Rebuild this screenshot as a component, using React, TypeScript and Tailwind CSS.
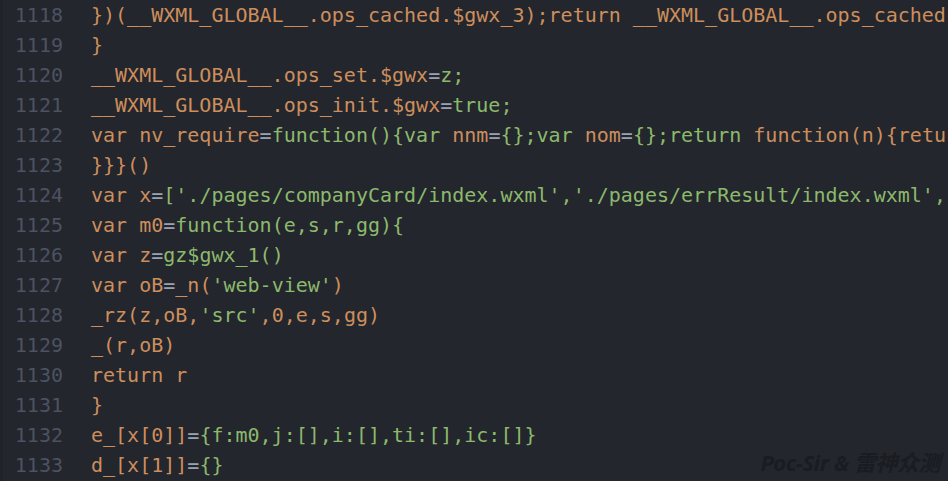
type Seg = [string, "o" | "g" | "e"];

const lines: { n: number; segs: Seg[] }[] = [
	{ n: 1118, segs: [["})(__WXML_GLOBAL__.ops_cached.$gwx_3);return __WXML_GLOBAL__.ops_cached.$gwx_3", "o"]] },
	{ n: 1119, segs: [["}", "o"]] },
	{ n: 1120, segs: [["__WXML_GLOBAL__.ops_set.$gwx", "o"], ["=", "e"], ["z;", "g"]] },
	{ n: 1121, segs: [["__WXML_GLOBAL__.ops_init.$gwx", "o"], ["=", "e"], ["true;", "g"]] },
	{
		n: 1122,
		segs: [
			["var nv_require", "o"],
			["=", "e"],
			["function(){var ", "g"],
			["nnm", "o"],
			["=", "e"],
			["{};var ", "g"],
			["nom", "o"],
			["=", "e"],
			["{};return ", "g"],
			["function(n){return function(){", "o"],
		],
	},
	{ n: 1123, segs: [["}}}()", "o"]] },
	{
		n: 1124,
		segs: [
			["var x", "o"],
			["=", "e"],
			["['./pages/companyCard/index.wxml','./pages/errResult/index.wxml','./pages/index/index.wxml']", "g"],
		],
	},
	{ n: 1125, segs: [["var m0", "o"], ["=", "e"], ["function(e,s,r,gg){", "g"]] },
	{ n: 1126, segs: [["var z", "o"], ["=", "e"], ["gz$gwx_1()", "g"]] },
	{ n: 1127, segs: [["var oB", "o"], ["=", "e"], ["_n(", "o"], ["'web-view'", "g"], [")", "o"]] },
	{ n: 1128, segs: [["_rz(z,oB,", "o"], ["'src'", "g"], [",0,e,s,gg)", "o"]] },
	{ n: 1129, segs: [["_(r,oB)", "o"]] },
	{ n: 1130, segs: [["return r", "o"]] },
	{ n: 1131, segs: [["}", "o"]] },
	{ n: 1132, segs: [["e_[x[0]]", "o"], ["=", "e"], ["{f:m0,j:[],i:[],ti:[],ic:[]}", "g"]] },
	{ n: 1133, segs: [["d_[x[1]]", "o"], ["=", "e"], ["{}", "g"]] },
];

const tone = {
	o: "text-[#cd8e5c]",
	g: "text-[#8cb96c]",
	e: "text-[#9aa2b1]",
};

export default function App() {
	return (
		<div className="relative w-[948px] h-[481px] overflow-hidden bg-[#23262d] border-l-[3px] border-[#1f2228] font-['DejaVu_Sans_Mono',monospace] text-[20px] leading-[30px]">
			{lines.map((l) => (
				<div key={l.n} className="flex h-[30px] whitespace-pre">
					<span className="w-[60px] shrink-0 text-right text-[#4c5261]">{l.n}</span>
					<span className="pl-[28px]">
						{l.segs.map((s, i) => (
							<span key={i} className={tone[s[1]]}>
								{s[0]}
							</span>
						))}
					</span>
				</div>
			))}
			<div className="absolute right-[8px] bottom-[4px] italic font-bold text-[22px] leading-[30px] text-[#1a1c21] font-['Noto_Sans','Noto_Sans_CJK_SC',sans-serif] tracking-[-0.5px]">
				Poc-Sir &amp; 雷神众测
			</div>
		</div>
	);
}
